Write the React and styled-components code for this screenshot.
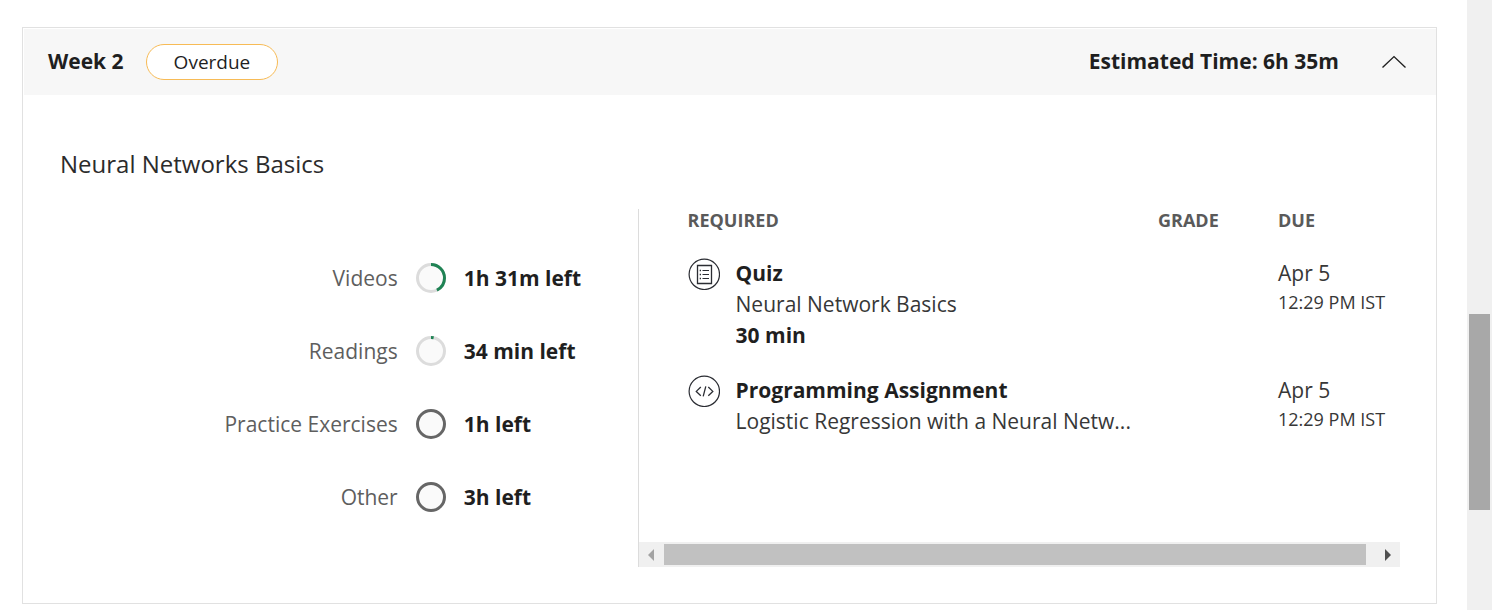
import React, { useState } from "react";
import styled, { createGlobalStyle } from "styled-components";

const GlobalStyle = createGlobalStyle`
  *, *::before, *::after { box-sizing: border-box; }
  body {
    margin: 0;
    background: #fff;
    color: #1f1f1f;
    font-family: "Open Sans", "Noto Sans", sans-serif;
    font-size: 21px;
    line-height: 31px;
    font-weight: 400;
  }
  h2, h3, ul, p { margin: 0; padding: 0; }
  ul { list-style: none; }
`;

const Page = styled.div`
  display: flex;
  min-height: 100vh;
`;

const Main = styled.main`
  flex: 1;
  min-width: 0;
  padding: 27px 30px 6px 22px;
`;

const Card = styled.section`
  border: 1px solid #e1e1e1;
  padding: 1px 0 0 1px;
`;

const CardHeader = styled.header`
  display: flex;
  align-items: center;
  height: 66px;
  padding: 0 24px;
  background: #f7f7f7;
`;

const WeekTitle = styled.h2`
  padding-bottom: 2px;
  font-size: 21px;
  font-weight: 700;
`;

const StatusPill = styled.span`
  margin-left: 22px;
  padding: 1px 27px;
  border: 1px solid #f7bb56;
  border-radius: 18px;
  background: #fff;
  font-size: 19px;
  line-height: 32px;
`;

const EstimatedTime = styled.p`
  margin-left: auto;
  padding-bottom: 2px;
  font-weight: 700;
`;

const ToggleButton = styled.button`
  display: flex;
  margin-left: 37px;
  padding: 6px;
  border: 0;
  background: none;
  color: #1f1f1f;
  cursor: pointer;
`;

const CardBody = styled.div`
  padding: 51px 36px 36px;
`;

const ModuleTitle = styled.h3`
  margin-bottom: 27px;
  color: #2b2b2b;
  font-size: 24px;
  line-height: 36px;
  font-weight: 400;
`;

const Columns = styled.div`
  display: flex;
`;

const ProgressList = styled.ul`
  flex: 578;
  min-width: 0;
  display: flex;
  flex-direction: column;
  gap: 42px;
  padding-top: 54px;
`;

const ProgressRow = styled.li`
  display: grid;
  grid-template-columns: 338fr 30px 174fr;
  column-gap: 18px;
  align-items: start;
`;

const ProgressLabel = styled.span`
  color: #5e5e5e;
  text-align: right;
`;

const TimeLeft = styled.span`
  font-weight: 700;
`;

const RequiredPanel = styled.div`
  flex: 762;
  min-width: 0;
  display: flex;
  flex-direction: column;
  border-left: 1px solid #dcdcdc;
`;

const TableArea = styled.div`
  padding: 0 0 81px 49px;
`;

const Table = styled.table`
  width: 100%;
  table-layout: fixed;
  border-collapse: collapse;
`;

const HeadCell = styled.th`
  width: ${(p) => p.$width || "auto"};
  padding: 0 0 27px;
  color: #5a5a5a;
  font-size: 18px;
  line-height: 22px;
  font-weight: 700;
  text-align: left;
`;

const Cell = styled.td`
  padding: 0 0 24px;
  vertical-align: top;
`;

const Item = styled.div`
  display: flex;
  gap: 16px;
  padding-right: 20px;
`;

const ItemText = styled.div`
  min-width: 0;
`;

const ItemLine = styled.p`
  overflow: hidden;
  white-space: nowrap;
  color: ${(p) => (p.$strong ? "#1f1f1f" : "#373737")};
  font-weight: ${(p) => (p.$strong ? 700 : 400)};
`;

const DueDate = styled.p`
  color: #373737;
`;

const DueTime = styled.p`
  color: #373737;
  font-size: 18px;
  line-height: 27px;
  white-space: nowrap;
`;

const HorizontalBar = styled.div`
  display: flex;
  height: 25px;
  padding: 2px 0;
  background: #f0f0f0;
`;

const ArrowButton = styled.button`
  flex: none;
  display: flex;
  align-items: center;
  justify-content: center;
  width: 25px;
  padding: 0;
  border: 0;
  background: none;
  color: ${(p) => (p.disabled ? "#a3a3a3" : "#505050")};
`;

const BarThumb = styled.div`
  flex: 1;
  margin-right: 9px;
  background: #c1c1c1;
`;

const VerticalBar = styled.div`
  flex: none;
  display: grid;
  grid-template-rows: 314fr 196fr 100fr;
  width: 25px;
  padding: 0 2px;
  background: #f0f0f0;
`;

const VerticalThumb = styled.div`
  grid-row: 2;
  background: #a8a8a8;
`;

const IconSvg = styled.svg`
  flex: none;
  display: block;
`;

function ProgressRing({ value }) {
  const length = 2 * Math.PI * 13.5;
  return (
    <IconSvg width="30" height="30" viewBox="0 0 30 30" fill="none" aria-hidden="true">
      <circle cx="15" cy="15" r="13.5" fill="#fafafa" stroke={value ? "#dcdcdc" : "#666"} strokeWidth="3" />
      {value > 0 && (
        <circle
          cx="15"
          cy="15"
          r="13.5"
          stroke="#1f8354"
          strokeWidth="3"
          strokeDasharray={`${length * value} ${length}`}
          transform="rotate(-90 15 15)"
        />
      )}
    </IconSvg>
  );
}

function QuizIcon() {
  return (
    <IconSvg width="32" height="32" viewBox="0 0 32 32" fill="none" stroke="#2b2d33" aria-hidden="true">
      <circle cx="16.3" cy="16.3" r="15.2" strokeWidth="1.2" />
      <path d="M9.5 7.5H23.5V25.5H9.5Z" strokeWidth="1.3" />
      <path d="M14.5 12.5H21M14.5 16.5H21M14.5 20.5H21" strokeWidth="1.2" />
      <path d="M11.7 12.5H13M11.7 16.5H13M11.7 20.5H13" strokeWidth="1.4" />
    </IconSvg>
  );
}

function CodeIcon() {
  return (
    <IconSvg width="32" height="32" viewBox="0 0 32 32" fill="none" stroke="#2b2d33" aria-hidden="true">
      <circle cx="16.3" cy="16.3" r="15.2" strokeWidth="1.2" />
      <path d="M12.8 12L8.3 16.4L12.8 20.7M20.3 12L24.8 16.4L20.3 20.7M17.8 11.4L15.2 21.4" strokeWidth="1.3" />
    </IconSvg>
  );
}

const progress = [
  { label: "Videos", left: "1h 31m left", value: 0.425 },
  { label: "Readings", left: "34 min left", value: 0.032 },
  { label: "Practice Exercises", left: "1h left", value: 0 },
  { label: "Other", left: "3h left", value: 0 },
];

const items = [
  { Icon: QuizIcon, type: "Quiz", name: "Neural Network Basics", duration: "30 min", date: "Apr 5", time: "12:29 PM IST" },
  { Icon: CodeIcon, type: "Programming Assignment", name: "Logistic Regression with a Neural Netw...", date: "Apr 5", time: "12:29 PM IST" },
];

export default function App() {
  const [open, setOpen] = useState(true);
  return (
    <Page>
      <GlobalStyle />
      <Main>
        <Card>
          <CardHeader>
            <WeekTitle>Week 2</WeekTitle>
            <StatusPill>Overdue</StatusPill>
            <EstimatedTime>Estimated Time: 6h 35m</EstimatedTime>
            <ToggleButton type="button" aria-label="Toggle week" aria-expanded={open} onClick={() => setOpen(!open)}>
              <IconSvg width="24" height="24" viewBox="0 0 24 24" fill="none" stroke="currentColor" strokeWidth="1.4">
                <path d={open ? "M0.5 17.6L12 6.6L23.5 17.6" : "M0.5 6.6L12 17.6L23.5 6.6"} />
              </IconSvg>
            </ToggleButton>
          </CardHeader>
          {open && (
            <CardBody>
              <ModuleTitle>Neural Networks Basics</ModuleTitle>
              <Columns>
                <ProgressList>
                  {progress.map((p) => (
                    <ProgressRow key={p.label}>
                      <ProgressLabel>{p.label}</ProgressLabel>
                      <ProgressRing value={p.value} />
                      <TimeLeft>{p.left}</TimeLeft>
                    </ProgressRow>
                  ))}
                </ProgressList>
                <RequiredPanel>
                  <TableArea>
                    <Table>
                      <thead>
                        <tr>
                          <HeadCell scope="col">REQUIRED</HeadCell>
                          <HeadCell scope="col" $width="120px">GRADE</HeadCell>
                          <HeadCell scope="col" $width="122px">DUE</HeadCell>
                        </tr>
                      </thead>
                      <tbody>
                        {items.map(({ Icon, type, name, duration, date, time }) => (
                          <tr key={type}>
                            <Cell>
                              <Item>
                                <Icon />
                                <ItemText>
                                  <ItemLine $strong>{type}</ItemLine>
                                  <ItemLine>{name}</ItemLine>
                                  {duration && <ItemLine $strong>{duration}</ItemLine>}
                                </ItemText>
                              </Item>
                            </Cell>
                            <Cell />
                            <Cell>
                              <DueDate>{date}</DueDate>
                              <DueTime>{time}</DueTime>
                            </Cell>
                          </tr>
                        ))}
                      </tbody>
                    </Table>
                  </TableArea>
                  <HorizontalBar>
                    <ArrowButton type="button" aria-label="Scroll left" disabled>
                      <IconSvg width="6" height="12" viewBox="0 0 6 12" fill="currentColor">
                        <path d="M6 0V12L0 6Z" />
                      </IconSvg>
                    </ArrowButton>
                    <BarThumb />
                    <ArrowButton type="button" aria-label="Scroll right">
                      <IconSvg width="6" height="12" viewBox="0 0 6 12" fill="currentColor">
                        <path d="M0 0V12L6 6Z" />
                      </IconSvg>
                    </ArrowButton>
                  </HorizontalBar>
                </RequiredPanel>
              </Columns>
            </CardBody>
          )}
        </Card>
      </Main>
      <VerticalBar aria-hidden="true">
        <VerticalThumb />
      </VerticalBar>
    </Page>
  );
}
